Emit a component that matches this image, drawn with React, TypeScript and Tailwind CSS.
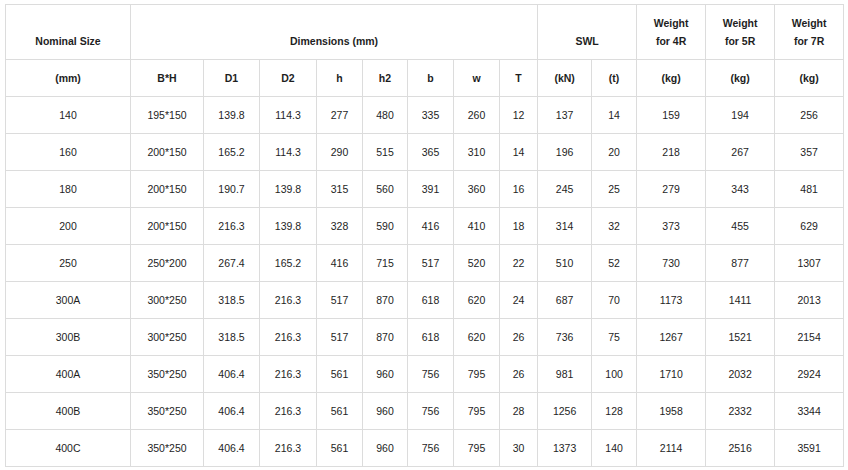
import React from "react";

const widths = [125, 73, 56, 57, 46, 45, 46, 46, 38, 54, 45, 69, 69, 69];

const rows: string[][] = [
  ["140", "195*150", "139.8", "114.3", "277", "480", "335", "260", "12", "137", "14", "159", "194", "256"],
  ["160", "200*150", "165.2", "114.3", "290", "515", "365", "310", "14", "196", "20", "218", "267", "357"],
  ["180", "200*150", "190.7", "139.8", "315", "560", "391", "360", "16", "245", "25", "279", "343", "481"],
  ["200", "200*150", "216.3", "139.8", "328", "590", "416", "410", "18", "314", "32", "373", "455", "629"],
  ["250", "250*200", "267.4", "165.2", "416", "715", "517", "520", "22", "510", "52", "730", "877", "1307"],
  ["300A", "300*250", "318.5", "216.3", "517", "870", "618", "620", "24", "687", "70", "1173", "1411", "2013"],
  ["300B", "300*250", "318.5", "216.3", "517", "870", "618", "620", "26", "736", "75", "1267", "1521", "2154"],
  ["400A", "350*250", "406.4", "216.3", "561", "960", "756", "795", "26", "981", "100", "1710", "2032", "2924"],
  ["400B", "350*250", "406.4", "216.3", "561", "960", "756", "795", "28", "1256", "128", "1958", "2332", "3344"],
  ["400C", "350*250", "406.4", "216.3", "561", "960", "756", "795", "30", "1373", "140", "2114", "2516", "3591"],
];

const subHeads = ["(mm)", "B*H", "D1", "D2", "h", "h2", "b", "w", "T", "(kN)", "(t)", "(kg)", "(kg)", "(kg)"];

const cell = "border border-[#dcdcdc] text-center align-middle p-0";

export default function App() {
  return (
    <div className="w-[848px] h-[470px] bg-white pt-[4px] pl-[5px]">
      <table
        className="border-collapse table-fixed w-[838px] border border-[#d4d4d4] text-[#1e1e1e] text-[10.5px] leading-[15px]"
        style={{ fontFamily: '"Liberation Sans", Arial, sans-serif' }}
      >
        <colgroup>
          {widths.map((w, i) => (
            <col key={i} style={{ width: w }} />
          ))}
        </colgroup>
        <thead>
          <tr className="h-[55px] font-bold leading-[18px]">
            {/* single-line headers sit on the second line, level with "for 4R" */}
            <th className={cell}><br />Nominal Size</th>
            <th className={cell} colSpan={8}><br />Dimensions (mm)</th>
            <th className={cell} colSpan={2}><br />SWL</th>
            <th className={cell}>Weight<br />for 4R</th>
            <th className={cell}>Weight<br />for 5R</th>
            <th className={cell}>Weight<br />for 7R</th>
          </tr>
          <tr className="h-[37px] font-bold">
            {subHeads.map((h, i) => (
              <th key={i} className={cell}>{h}</th>
            ))}
          </tr>
        </thead>
        <tbody>
          {rows.map((r, ri) => (
            <tr key={ri} className="h-[37px]">
              {r.map((v, ci) => (
                <td key={ci} className={cell}>{v}</td>
              ))}
            </tr>
          ))}
        </tbody>
      </table>
    </div>
  );
}
